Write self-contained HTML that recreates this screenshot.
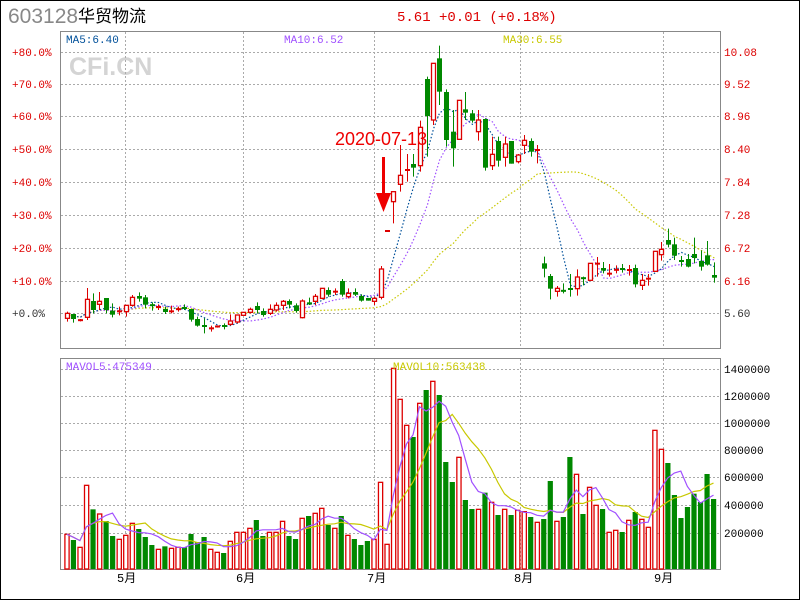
<!DOCTYPE html>
<html><head><meta charset="utf-8"><style>
html,body{margin:0;padding:0;background:#fff}
svg{display:block}
text{font-family:"Liberation Mono","Noto Sans CJK SC",monospace}
</style></head><body>
<svg id="s" width="800" height="600" xmlns="http://www.w3.org/2000/svg">
<rect x="0.5" y="0.5" width="799" height="599" fill="#fff" stroke="#000"/>
<text x="8" y="23" font-size="21" fill="#888" style="font-family:'Liberation Sans',sans-serif">603128</text>
<text x="78" y="22" font-size="17" fill="#000" style="font-family:'Liberation Sans','Noto Sans CJK SC',sans-serif">华贸物流</text>
<text x="397" y="21" font-size="14" fill="#d00">5.61 +0.01 (+0.18%)</text>
<text x="69" y="75" font-size="25" font-weight="bold" fill="#d4d4d4" style="font-family:'Liberation Sans',sans-serif">CFi.CN</text>
<g id="grid" stroke="#aaa" stroke-dasharray="2,2" fill="none"></g>
<rect x="60.5" y="31.5" width="660" height="317" fill="none" stroke="#888"/>
<rect x="60.5" y="358.5" width="660" height="211" fill="none" stroke="#888"/>
<g id="plot"></g>
<text x="66" y="43" font-size="11" fill="#00509a">MA5:6.40</text>
<text x="284" y="43" font-size="11" fill="#a050ff">MA10:6.52</text>
<text x="503" y="43" font-size="11" fill="#c8c800">MA30:6.55</text>
<text x="66" y="370" font-size="11" fill="#a050ff">MAVOL5:475349</text>
<text x="393" y="370" font-size="11" fill="#c8c800">MAVOL10:563438</text>
<text x="335" y="145" font-size="18" fill="#e00" style="font-family:'Liberation Sans',sans-serif">2020-07-13</text>
<g fill="#e00"><rect x="382" y="157" width="3" height="40"/><polygon points="376,193 391,193 383.5,212"/></g>
<g id="labels" font-size="11"></g>
</svg>
<script>
var NS="http://www.w3.org/2000/svg";
function el(p,t,a){var e=document.createElementNS(NS,t);for(var k in a)e.setAttribute(k,a[k]);p.appendChild(e);return e;}
var grid=document.getElementById('grid'),plot=document.getElementById('plot'),lab=document.getElementById('labels');
var hy=[52,84,116,149,182,215,248,281,313],vx=[125,243,374,520,663];
hy.forEach(function(y){el(grid,'line',{x1:61,x2:720,y1:y+.5,y2:y+.5});});
vx.forEach(function(x){el(grid,'line',{x1:x+.5,x2:x+.5,y1:32,y2:348});el(grid,'line',{x1:x+.5,x2:x+.5,y1:359,y2:569});});
var vy=[369,396,423,450,477,505,533];
vy.forEach(function(y){el(grid,'line',{x1:61,x2:720,y1:y+.5,y2:y+.5});});
var pl=['+80.0%','+70.0%','+60.0%','+50.0%','+40.0%','+30.0%','+20.0%','+10.0%','+0.0%'];
var pr=['10.08','9.52','8.96','8.40','7.84','7.28','6.72','6.16','5.60'];
hy.forEach(function(y,i){var c=i==8?'#333':'#d00';
 var t=el(lab,'text',{x:12,y:y+4,fill:c});t.textContent=pl[i];
 t=el(lab,'text',{x:724,y:y+4,fill:c});t.textContent=pr[i];});
var vl=['1400000','1200000','1000000','800000','600000','400000','200000'];
vy.forEach(function(y,i){var t=el(lab,'text',{x:724,y:y+4,fill:'#000'});t.textContent=vl[i];});
[['5月',117],['6月',236],['7月',367],['8月',514],['9月',654]].forEach(function(m){var t=el(lab,'text',{x:m[1],y:582,fill:'#000','font-size':12});t.textContent=m[0];});
var Z4=[[20,'r',160,175,155,185],[40,'g',162,177,162,188],[60,'r',177,184,177,184],[80,'r',118,172,84,180],[98,'g',123,150,100,160],[118,'r',124,133,96,150],[138,'g',114,150,114,160],[157,'g',152,164,130,172],[177,'r',151,157,140,166],[197,'r',136,155,136,170],[216,'r',112,136,105,140],[236,'g',108,116,97,125],[256,'g',112,134,105,145],[275,'g',134,137,127,152],[295,'r',138,144,133,150],[315,'g',147,156,140,162],[334,'r',153,155,137,160],[354,'r',145,150,140,155],[373,'g',142,146,133,150],[393,'g',147,179,147,185],[412,'g',177,197,170,200],[432,'g',196,200,175,220],[452,'r',204,206,197,215],[472,'r',196,203,196,203],[491,'g',196,200,190,208],[511,'r',183,193,163,197],[530,'r',165,186,165,190],[550,'r',157,166,157,166],[570,'r',148,157,143,160],[590,'g',138,150,127,160],[609,'g',153,165,145,170],[629,'r',148,160,133,165],[648,'r',136,150,127,155],[668,'r',124,136,120,150],[687,'g',123,134,118,145],[707,'g',136,153,130,158],[727,'r',123,173,118,175],[746,'g',128,132,113,135],[766,'r',109,124,102,135],[786,'r',85,115,85,118],[805,'g',90,104,82,110],[825,'r',94,96,85,105],[845,'g',63,104,57,110],[864,'r',100,110,85,115],[884,'g',96,104,85,108],[903,'g',108,122,103,125],[923,'g',114,122,114,122],[942,'r',115,124,110,135],[962,'r',27,112,18,118]];
var Z2=[[81,'r',602,604,602,604],[100,'r',485,515,485,580],[120,'r',436,463,345,485],[141,'r',419,421,372,455],[160,'g',402,413,372,440],[180,'r',292,407,272,425],[200,'g',147,258,140,380],[219,'r',100,270,100,285],[238,'g',85,185,47,225],[258,'g',186,330,178,350],[278,'g',305,355,240,410],[297,'r',211,328,211,328],[316,'g',238,248,186,270],[336,'g',250,272,240,278],[355,'r',270,305,240,332],[375,'g',267,413,265,422],[395,'r',373,407,320,420],[415,'g',333,392,320,410],[434,'r',342,382,320,410],[454,'g',333,401,333,401],[473,'r',375,395,372,400]];
var Z5=[[12,'r',31,46,15,72],[32,'g',33,65,25,80],[52,'r',59,61,45,100],[72,'g',400,416,380,442],[91,'g',438,476,432,508],[110,'r',475,484,468,500],[130,'g',480,485,460,490],[150,'g',476,478,432,500],[170,'r',441,476,418,497],[190,'g',443,446,440,466],[210,'r',400,451,400,451],[230,'r',400,402,381,440],[248,'g',414,422,396,430],[268,'r',430,432,402,440],[288,'r',418,421,406,430],[307,'g',414,420,402,428],[327,'r',419,421,405,437],[346,'g',414,463,404,472],[366,'r',451,466,432,480],[385,'r',444,448,432,467],[405,'r',364,424,364,424],[424,'r',358,374,336,392],[444,'g',330,344,296,352],[463,'g',343,377,323,390],[483,'g',392,394,378,410],[503,'g',387,410,372,412],[522,'g',372,384,323,400],[542,'g',393,410,361,422],[562,'g',376,404,333,407],[582,'g',435,443,397,458]];
var C=[];
function add(Z,ox,oy){Z.forEach(function(d){C.push({x:Math.round(ox+d[0]/3),c:d[1],bt:oy+d[2]/3,bb:oy+d[3]/3,wt:oy+d[4]/3,wb:oy+d[5]/3});});}
add(Z4,60,260);add(Z2,360,30);add(Z5,520,130);
C.forEach(function(k){k.cl=k.c=='r'?k.bt:k.bb;});
function ma(arr,n,f){var r=[];for(var i=0;i<arr.length;i++){var s=0,m=0;for(var j=Math.max(0,i-n+1);j<=i;j++){s+=f(arr[j]);m++;}r.push(s/m);}return r;}
function dots(xs,ys,col,start){var p='';for(var i=start;i<xs.length;i++)p+=(i==start?'M':'L')+xs[i]+','+ys[i];el(plot,'path',{d:p,fill:'none',stroke:col,'stroke-width':1.2,'stroke-dasharray':'1.5,2'});}
var xs=C.map(function(k){return k.x+0.5;});
var m30=ma(C,30,function(k){return k.cl;});m30=m30.map(function(v,i){return i<30?Math.max(v,300+ (i<6?2:0)) :v;});
dots(xs,m30,'#c8c800',0);
dots(xs,ma(C,10,function(k){return k.cl;}),'#a050ff',2);
dots(xs,ma(C,5,function(k){return k.cl;}),'#00509a',1);
C.forEach(function(k){var col=k.c=='r'?'#d00':'#080';
 el(plot,'line',{x1:k.x+.5,x2:k.x+.5,y1:k.wt,y2:k.wb,stroke:col});
 var h=Math.max(1,k.bb-k.bt);
 if(h<2.5){el(plot,'rect',{x:k.x-2,y:(k.bt+k.bb)/2-1,width:5,height:2,fill:col});}
 else if(k.c=='r')el(plot,'rect',{x:k.x-1.5,y:k.bt,width:4,height:h,fill:'#fff',stroke:col,'stroke-width':1.3});
 else el(plot,'rect',{x:k.x-2,y:k.bt,width:5,height:h,fill:col});});
var V1c='rgrrgrggrrrgggrgrrggggrrgrrrrggrrrggrgrrgrgrgggrrrr';
var V1t=[583,600,622,436,508,522,543,588,598,586,550,567,591,615,628,619,625,622,622,582,606,591,628,637,639,604,577,577,565,540,588,577,577,544,588,597,535,528,520,505,555,565,528,586,597,615,603,598,427,613,85];
var V2t=[118,196,231,130,90,64,105,306,366,292,420,447,448,398,427,465,448,465,451,455,471,487,477,363,484,471,291,343,462,382,436,447,517,511,516,481,456,478,502,211,268,309,405,474,441,401,426,342,417];
var V2col=['r','r','g','r','g','r','g','g','g','r','g','g','r','g','r','g','r','g','r','r','g','r','g','g','r','g','g','r','g','r','r','g','r','r','g','r','g','r','r','r','r','g','g','g','g','g','g','g','g'];
var V=[];
V1t.forEach(function(t,i){V.push({c:V1c[i],t:340+t/3});});
V2t.forEach(function(t,i){V.push({c:V2col[i],t:360+t/3});});
var vxs=[];var pitch=(711-64.3)/(V.length-1);
V.forEach(function(b,i){var x=64.3+i*pitch;vxs.push(x+2.5);var h=569-b.t;
 if(b.c=='r')el(plot,'rect',{x:x+.6,y:b.t,width:4.2,height:h,fill:'#fff',stroke:'#d00','stroke-width':1.3});
 else el(plot,'rect',{x:x,y:b.t,width:5.2,height:h,fill:'#080'});});
function line(xs,ys,col){var p='';for(var i=0;i<xs.length;i++)p+=(i?'L':'M')+xs[i].toFixed(1)+','+ys[i].toFixed(1);el(plot,'path',{d:p,fill:'none',stroke:col,'stroke-width':1.2});}
line(vxs,ma(V,10,function(b){return b.t;}),'#c8c800');
line(vxs,ma(V,5,function(b){return b.t;}),'#a050ff');
</script>
</body></html>
